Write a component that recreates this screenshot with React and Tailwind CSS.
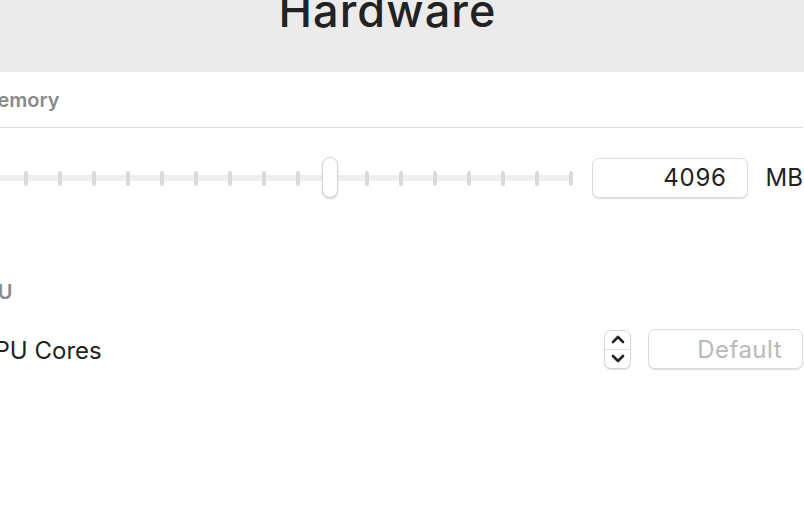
import React from 'react';

const ticks = Array.from({ length: 18 });

function Stepper() {
  return (
    <div className="w-[27px] h-[39px] rounded-[7px] border border-[#d6d6d6] bg-white shadow-[0_1px_1px_rgba(0,0,0,0.12)] flex flex-col">
      <div className="flex-1 flex items-center justify-center border-b border-[#e2e2e2]">
        <svg width="14" height="9" viewBox="0 0 14 9" fill="none">
          <path d="M2 7 L7 2 L12 7" stroke="#222" strokeWidth="2.6" strokeLinecap="round" strokeLinejoin="round" />
        </svg>
      </div>
      <div className="flex-1 flex items-center justify-center">
        <svg width="14" height="9" viewBox="0 0 14 9" fill="none">
          <path d="M2 2 L7 7 L12 2" stroke="#222" strokeWidth="2.6" strokeLinecap="round" strokeLinejoin="round" />
        </svg>
      </div>
    </div>
  );
}

export default function App() {
  return (
    <div className="w-[804px] h-[518px] overflow-hidden bg-white font-['Inter',sans-serif] text-[#222]">
      {/* Title bar */}
      <div className="h-[72px] bg-[#ebebeb] overflow-hidden">
        <div className="w-[775px] flex justify-center">
          <h1 className="text-[45px] leading-none mt-[-12px] tracking-[0.025em] text-[#222] font-medium">Hardware</h1>
        </div>
      </div>

      <div className="ml-[-16px] w-[819px]">
        {/* Memory */}
        <div className="pt-[16px] pb-[15px] border-b border-[#dcdcdc] text-[20px] leading-[24px] font-semibold text-[#8a8a8a]">
          <span className="ml-[-5px]">Memory</span>
        </div>

        <div className="mt-[30px] h-[40px] flex items-center">
          <div className="relative ml-[6px] w-[583px] h-[40px] flex items-center flex-none">
            <div className="absolute left-0 right-0 top-1/2 -translate-y-1/2 h-[6px] bg-[#efefef] rounded-full" />
            <div className="relative w-full flex justify-between items-center">
              {ticks.map((_, i) => (
                <div key={i} className="w-[4px] h-[15px] rounded-full bg-[#dadada]" />
              ))}
            </div>
            <div className="absolute left-[332px] top-[-1px] w-[16px] h-[41px] rounded-full bg-white border border-[#d4d4d4] shadow-[0_1px_2px_rgba(0,0,0,0.18)]" />
          </div>
          <div className="ml-[19px] w-[156px] h-[40px] rounded-[7px] border border-[#dddddd] bg-white shadow-[0_1px_1px_rgba(0,0,0,0.14)] flex items-center justify-end pr-[20px] text-[24px] tracking-[0.03em]">
            4096
          </div>
          <div className="ml-[18px] text-[24px]">MB</div>
        </div>

        {/* CPU */}
        <div className="mt-[82px] text-[20px] leading-[24px] font-semibold text-[#8a8a8a]">
          <span className="ml-[-14px]">CPU</span>
        </div>

        <div className="mt-[25px] h-[40px] flex items-center">
          <div className="text-[24px] flex-1 pt-[3px]">
            <span className="ml-[-7px]">CPU Cores</span>
          </div>
          <Stepper />
          <div className="ml-[17px] w-[155px] h-[40px] rounded-[7px] border border-[#dddddd] bg-white shadow-[0_1px_1px_rgba(0,0,0,0.14)] flex items-center justify-end pr-[20px] pt-[2px] text-[24px] text-[#b9b9b9] tracking-[0.02em]">
            Default
          </div>
        </div>
      </div>
    </div>
  );
}
